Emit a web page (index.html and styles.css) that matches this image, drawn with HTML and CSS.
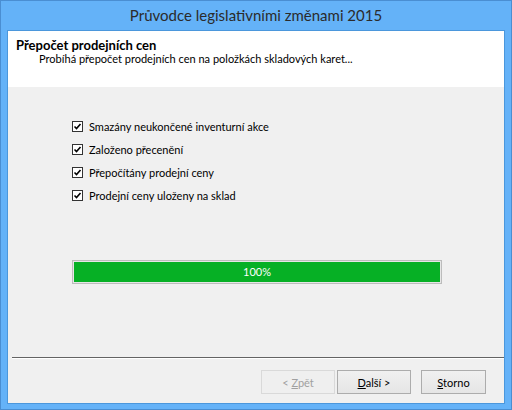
FILE: index.html
```html
<!DOCTYPE html>
<html lang="cs">
<head>
    <meta charset="UTF-8">
    <title>Průvodce legislativními změnami 2015</title>
    <link rel="stylesheet" href="styles.css">
</head>
<body>
<div class="window">
    <div class="titlebar">Průvodce legislativními změnami 2015</div>
    <div class="client">
        <div class="header">
            <div class="header-title">Přepočet prodejních cen</div>
            <div class="header-sub">Probíhá přepočet prodejních cen na položkách skladových karet...</div>
        </div>
        <div class="content">
            <ul class="steps">
                <li><svg class="check" viewBox="0 0 11 11"><rect x="0.5" y="0.5" width="10" height="10" fill="#fff" stroke="#333"/><path d="M2.5 5.5 L4.5 7.5 L8.5 3" fill="none" stroke="#000" stroke-width="1.6"/></svg>Smazány neukončené inventurní akce</li>
                <li><svg class="check" viewBox="0 0 11 11"><rect x="0.5" y="0.5" width="10" height="10" fill="#fff" stroke="#333"/><path d="M2.5 5.5 L4.5 7.5 L8.5 3" fill="none" stroke="#000" stroke-width="1.6"/></svg>Založeno přecenění</li>
                <li><svg class="check" viewBox="0 0 11 11"><rect x="0.5" y="0.5" width="10" height="10" fill="#fff" stroke="#333"/><path d="M2.5 5.5 L4.5 7.5 L8.5 3" fill="none" stroke="#000" stroke-width="1.6"/></svg>Přepočítány prodejní ceny</li>
                <li><svg class="check" viewBox="0 0 11 11"><rect x="0.5" y="0.5" width="10" height="10" fill="#fff" stroke="#333"/><path d="M2.5 5.5 L4.5 7.5 L8.5 3" fill="none" stroke="#000" stroke-width="1.6"/></svg>Prodejní ceny uloženy na sklad</li>
            </ul>
            <div class="progress">
                <div class="progress-fill" style="width: 100%">100%</div>
            </div>
        </div>
        <div class="separator"></div>
        <div class="footer">
            <button class="btn" disabled>&lt; <u>Z</u>pět</button>
            <button class="btn"><u>D</u>alší &gt;</button>
            <button class="btn btn-cancel"><u>S</u>torno</button>
        </div>
    </div>
</div>
</body>
</html>
```

FILE: styles.css
```css
body {
    margin: 0;
    font-family: Lato, "Liberation Sans", sans-serif;
    font-size: 11px;
    color: #000;
}

.window {
    width: 512px;
    height: 410px;
    box-sizing: border-box;
    border: 1px solid #4a8ed2;
    background: #64b2f8;
    padding: 0 6px 5px;
    display: flex;
    flex-direction: column;
}

.titlebar {
    height: 29px;
    line-height: 29px;
    text-align: center;
    font-size: 15px;
    color: #2b2b2b;
}

.client {
    flex: 1;
    border: 1px solid #4b97dc;
    background: #f0f0f0;
    display: flex;
    flex-direction: column;
}

.header {
    height: 56px;
    box-sizing: border-box;
    background: #fff;
    padding: 7px 0 0 8px;
    line-height: 14px;
}

.header-title {
    font-weight: bold;
    font-size: 13px;
}

.header-sub {
    margin-left: 23px;
}

.content {
    height: 270px;
    box-sizing: border-box;
    padding: 28px 62px 0 64px;
}

.steps {
    list-style: none;
    margin: 0;
    padding: 0;
}

.steps li {
    height: 23px;
    display: flex;
    align-items: center;
}

.check {
    width: 11px;
    height: 11px;
    margin-right: 6px;
}

.progress {
    margin-top: 53px;
    height: 24px;
    box-sizing: border-box;
    border: 1px solid #bcbcbc;
    background: #e6e6e6;
    padding: 1px;
}

.progress-fill {
    height: 100%;
    background: #06b025;
    color: #fff;
    font-size: 11px;
    line-height: 20px;
    text-align: center;
}

.separator {
    margin-left: 4px;
    height: 1px;
    background: #646464;
    border-bottom: 1px solid #fff;
}

.footer {
    flex: 1;
    display: flex;
    justify-content: flex-end;
    gap: 2px;
    padding: 11px 18px 0 0;
}

.btn {
    width: 74px;
    height: 24px;
    border: 1px solid #acacac;
    background: linear-gradient(#f0f0f0, #e5e5e5);
    font-family: Lato, "Liberation Sans", sans-serif;
    font-size: 11px;
    color: #000;
    padding: 0;
}

.btn:disabled {
    border-color: #d9d9d9;
    background: #efefef;
    color: #a0a0a0;
}

.btn-cancel {
    width: 65px;
    margin-left: 8px;
}
```
